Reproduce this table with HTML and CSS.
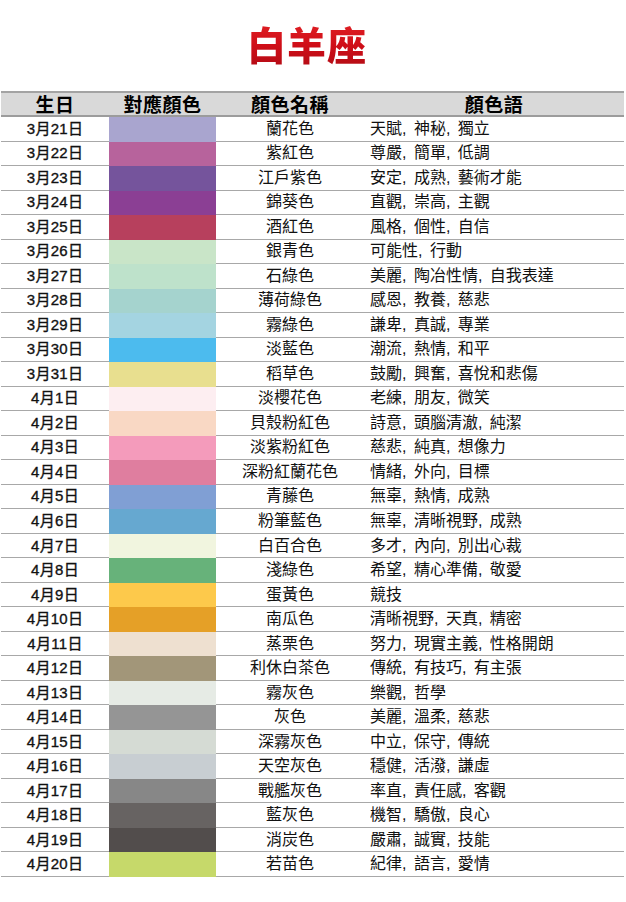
FILE: index.html
```html
<!DOCTYPE html>
<html lang="zh-Hant">
<head>
<meta charset="utf-8">
<title>白羊座</title>
<link rel="stylesheet" href="styles.css">
</head>
<body>
<div class="page">
  <h1 class="title">白羊座</h1>
  <div class="colors">
    <div class="hd">生日</div><div class="hd">對應顏色</div><div class="hd">顏色名稱</div><div class="hd">顏色語</div>

    <div class="date">3月21日</div><div class="sw" style="--c:#a9a5cf"></div><div class="name">蘭花色</div><div class="words">天賦, 神秘, 獨立</div>
    <div class="date">3月22日</div><div class="sw" style="--c:#b7639c"></div><div class="name">紫紅色</div><div class="words">尊嚴, 簡單, 低調</div>
    <div class="date">3月23日</div><div class="sw" style="--c:#75549c"></div><div class="name">江戶紫色</div><div class="words">安定, 成熟, 藝術才能</div>
    <div class="date">3月24日</div><div class="sw" style="--c:#8b3f94"></div><div class="name">錦葵色</div><div class="words">直觀, 崇高, 主觀</div>
    <div class="date">3月25日</div><div class="sw" style="--c:#b7405d"></div><div class="name">酒紅色</div><div class="words">風格, 個性, 自信</div>
    <div class="date">3月26日</div><div class="sw" style="--c:#c9e5c8"></div><div class="name">銀青色</div><div class="words">可能性, 行動</div>
    <div class="date">3月27日</div><div class="sw" style="--c:#bee2cb"></div><div class="name">石綠色</div><div class="words">美麗, 陶冶性情, 自我表達</div>
    <div class="date">3月28日</div><div class="sw" style="--c:#a5d3ce"></div><div class="name">薄荷綠色</div><div class="words">感恩, 教養, 慈悲</div>
    <div class="date">3月29日</div><div class="sw" style="--c:#a4d4e1"></div><div class="name">霧綠色</div><div class="words">謙卑, 真誠, 專業</div>
    <div class="date">3月30日</div><div class="sw" style="--c:#4cbbee"></div><div class="name">淡藍色</div><div class="words">潮流, 熱情, 和平</div>
    <div class="date">3月31日</div><div class="sw" style="--c:#e8df8f"></div><div class="name">稻草色</div><div class="words">鼓勵, 興奮, 喜悅和悲傷</div>
    <div class="date">4月1日</div><div class="sw" style="--c:#fdeef1"></div><div class="name">淡櫻花色</div><div class="words">老練, 朋友, 微笑</div>
    <div class="date">4月2日</div><div class="sw" style="--c:#f9d8c4"></div><div class="name">貝殼粉紅色</div><div class="words">詩意, 頭腦清澈, 純潔</div>
    <div class="date">4月3日</div><div class="sw" style="--c:#f49bbb"></div><div class="name">淡紫粉紅色</div><div class="words">慈悲, 純真, 想像力</div>
    <div class="date">4月4日</div><div class="sw" style="--c:#df7e9f"></div><div class="name">深粉紅蘭花色</div><div class="words">情緒, 外向, 目標</div>
    <div class="date">4月5日</div><div class="sw" style="--c:#809fd4"></div><div class="name">青藤色</div><div class="words">無辜, 熱情, 成熟</div>
    <div class="date">4月6日</div><div class="sw" style="--c:#66a8d0"></div><div class="name">粉筆藍色</div><div class="words">無辜, 清晰視野, 成熟</div>
    <div class="date">4月7日</div><div class="sw" style="--c:#f1f5df"></div><div class="name">白百合色</div><div class="words">多才, 內向, 別出心裁</div>
    <div class="date">4月8日</div><div class="sw" style="--c:#67b27a"></div><div class="name">淺綠色</div><div class="words">希望, 精心準備, 敬愛</div>
    <div class="date">4月9日</div><div class="sw" style="--c:#fdc94b"></div><div class="name">蛋黃色</div><div class="words">競技</div>
    <div class="date">4月10日</div><div class="sw" style="--c:#e5a027"></div><div class="name">南瓜色</div><div class="words">清晰視野, 天真, 精密</div>
    <div class="date">4月11日</div><div class="sw" style="--c:#eee0d0"></div><div class="name">蒸栗色</div><div class="words">努力, 現實主義, 性格開朗</div>
    <div class="date">4月12日</div><div class="sw" style="--c:#a29679"></div><div class="name">利休白茶色</div><div class="words">傳統, 有技巧, 有主張</div>
    <div class="date">4月13日</div><div class="sw" style="--c:#e6ebe5"></div><div class="name">霧灰色</div><div class="words">樂觀, 哲學</div>
    <div class="date">4月14日</div><div class="sw" style="--c:#959595"></div><div class="name">灰色</div><div class="words">美麗, 溫柔, 慈悲</div>
    <div class="date">4月15日</div><div class="sw" style="--c:#d5dbd4"></div><div class="name">深霧灰色</div><div class="words">中立, 保守, 傳統</div>
    <div class="date">4月16日</div><div class="sw" style="--c:#c8ced2"></div><div class="name">天空灰色</div><div class="words">穩健, 活潑, 謙虛</div>
    <div class="date">4月17日</div><div class="sw" style="--c:#878787"></div><div class="name">戰艦灰色</div><div class="words">率直, 責任感, 客觀</div>
    <div class="date">4月18日</div><div class="sw" style="--c:#676362"></div><div class="name">藍灰色</div><div class="words">機智, 驕傲, 良心</div>
    <div class="date">4月19日</div><div class="sw" style="--c:#524d4c"></div><div class="name">消炭色</div><div class="words">嚴肅, 誠實, 技能</div>
    <div class="date">4月20日</div><div class="sw" style="--c:#c6d96a"></div><div class="name">若苗色</div><div class="words">紀律, 語言, 愛情</div>
  </div>
</div>
</body>
</html>
```

FILE: styles.css
```css
html, body {
  margin: 0;
  padding: 0;
  background: #ffffff;
}

.page {
  width: 626px;
  font-family: "Liberation Sans", "Noto Sans CJK TC", sans-serif;
  color: #111;
}

.title {
  margin: 0;
  height: 91px;
  display: flex;
  align-items: center;
  justify-content: center;
  padding: 0 12px 5px 0;
  box-sizing: border-box;
  font-family: "Noto Sans CJK TC", sans-serif;
  font-weight: 900;
  font-size: 39px;
  letter-spacing: 1px;
  line-height: 1;
  color: #d8121c;
  background: linear-gradient(180deg, #f03030 0%, #cf0e18 50%, #960a12 100%);
  -webkit-background-clip: text;
  background-clip: text;
  -webkit-text-fill-color: transparent;
}

.colors {
  margin-left: 1px;
  width: 623px;
  display: grid;
  grid-template-columns: 108px 107px 148px 260px;
  grid-template-rows: 26px;
  grid-auto-rows: 24.516px;
}

.colors > div {
  box-sizing: border-box;
  display: flex;
  align-items: center;
  min-width: 0;
  overflow: hidden;
  white-space: nowrap;
  border-bottom: 1px solid #a8a8a8;
  font-size: 16px;
  line-height: 16px;
}

.colors > .hd {
  justify-content: center;
  background: #d9d9d9;
  border-top: 2px solid #a3a3a3;
  border-bottom: 2px solid #9c9c9c;
  font-family: "Noto Sans CJK TC", sans-serif;
  font-weight: 700;
  font-size: 19px;
  letter-spacing: 0.5px;
  line-height: 20px;
  color: #000;
}

.colors > .date {
  justify-content: center;
  font-size: 15px;
  letter-spacing: 0.3px;
  -webkit-text-stroke: 0.35px #111;
}

.colors > .sw {
  background: var(--c);
  border-bottom-color: var(--c);
}

.colors > .name {
  justify-content: center;
}

.colors > .words {
  padding-left: 6px;
  word-spacing: 3px;
}
```
